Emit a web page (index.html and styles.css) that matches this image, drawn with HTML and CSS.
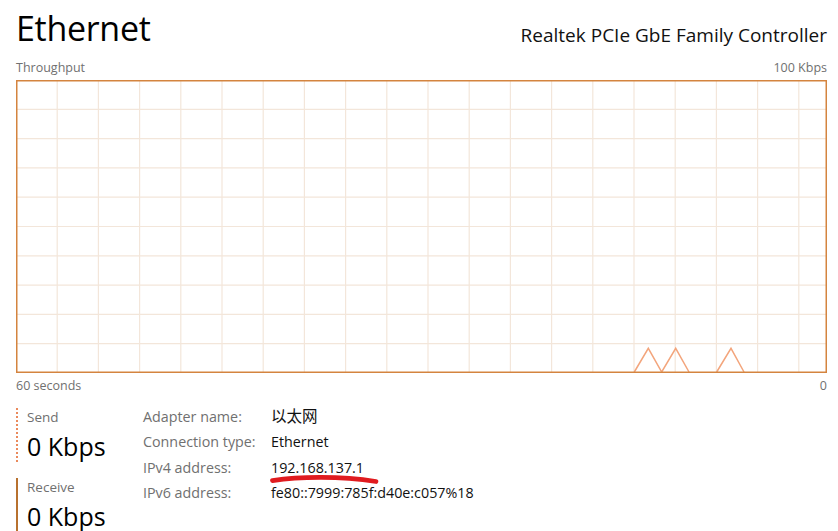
FILE: index.html
```html
<!DOCTYPE html>
<html>
<head>
<meta charset="utf-8">
<link rel="stylesheet" href="styles.css">
</head>
<body>
<div class="page">
  <header class="header">
    <h1 class="title">Ethernet</h1>
    <div class="subtitle">Realtek PCIe GbE Family Controller</div>
  </header>
  <div class="axis-row axis-top">
    <span>Throughput</span>
    <span>100 Kbps</span>
  </div>
  <svg class="chart" width="811" height="293" viewBox="0 0 811 293">
    <g class="grid">
      <line x1="41.2" y1="0" x2="41.2" y2="293"/>
      <line x1="82.4" y1="0" x2="82.4" y2="293"/>
      <line x1="123.6" y1="0" x2="123.6" y2="293"/>
      <line x1="164.8" y1="0" x2="164.8" y2="293"/>
      <line x1="206" y1="0" x2="206" y2="293"/>
      <line x1="247.2" y1="0" x2="247.2" y2="293"/>
      <line x1="288.4" y1="0" x2="288.4" y2="293"/>
      <line x1="329.6" y1="0" x2="329.6" y2="293"/>
      <line x1="370.8" y1="0" x2="370.8" y2="293"/>
      <line x1="412" y1="0" x2="412" y2="293"/>
      <line x1="453.2" y1="0" x2="453.2" y2="293"/>
      <line x1="494.4" y1="0" x2="494.4" y2="293"/>
      <line x1="535.6" y1="0" x2="535.6" y2="293"/>
      <line x1="576.8" y1="0" x2="576.8" y2="293"/>
      <line x1="618" y1="0" x2="618" y2="293"/>
      <line x1="659.2" y1="0" x2="659.2" y2="293"/>
      <line x1="700.4" y1="0" x2="700.4" y2="293"/>
      <line x1="741.6" y1="0" x2="741.6" y2="293"/>
      <line x1="782.8" y1="0" x2="782.8" y2="293"/>
      <line x1="0" y1="29.3" x2="811" y2="29.3"/>
      <line x1="0" y1="58.6" x2="811" y2="58.6"/>
      <line x1="0" y1="87.9" x2="811" y2="87.9"/>
      <line x1="0" y1="117.2" x2="811" y2="117.2"/>
      <line x1="0" y1="146.5" x2="811" y2="146.5"/>
      <line x1="0" y1="175.8" x2="811" y2="175.8"/>
      <line x1="0" y1="205.1" x2="811" y2="205.1"/>
      <line x1="0" y1="234.4" x2="811" y2="234.4"/>
      <line x1="0" y1="263.7" x2="811" y2="263.7"/>
    </g>
    <polyline class="trace" points="618.3,292 632.3,268.3 645.7,292 659.7,268.3 673,292"/>
    <polyline class="trace" points="700.7,292 715,268.3 728,292"/>
    <rect class="frame" x="0.75" y="0.75" width="809.5" height="291.5"/>
  </svg>
  <div class="axis-row axis-bottom">
    <span>60 seconds</span>
    <span>0</span>
  </div>
  <div class="bottom">
    <div class="stats">
      <div class="stat stat-send">
        <div class="stat-label">Send</div>
        <div class="stat-value">0 Kbps</div>
      </div>
      <div class="stat stat-recv">
        <div class="stat-label">Receive</div>
        <div class="stat-value">0 Kbps</div>
      </div>
    </div>
    <div class="details">
      <div class="dl">Adapter name:</div><div class="dv cjk">以太网</div>
      <div class="dl">Connection type:</div><div class="dv">Ethernet</div>
      <div class="dl">IPv4 address:</div><div class="dv">192.168.137.1</div>
      <div class="dl">IPv6 address:</div><div class="dv">fe80::7999:785f:d40e:c057%18</div>
    </div>
  </div>
  <svg class="scribble" width="838" height="531" viewBox="0 0 838 531">
    <path d="M272.5 480.5 C 300 476.5, 340 476, 376 481.5"/>
  </svg>
</div>
</body>
</html>
```
FILE: styles.css
```css
html, body {
  margin: 0;
  padding: 0;
  background: #ffffff;
}
body {
  font-family: "Open Sans", "Noto Sans", "Noto Sans CJK SC", sans-serif;
  color: #000;
  overflow: hidden;
}
.page {
  position: relative;
  width: 838px;
  height: 531px;
  box-sizing: border-box;
  padding: 8px 11px 0 16px;
}
.header {
  display: flex;
  justify-content: space-between;
  align-items: baseline;
  height: 40px;
}
.title {
  margin: 0;
  font-weight: 400;
  font-size: 34px;
  line-height: 40px;
  letter-spacing: -0.3px;
  color: #000;
}
.subtitle {
  font-size: 19px;
  line-height: 24px;
  color: #111;
  position: relative;
  top: 1px;
}
.axis-row {
  display: flex;
  justify-content: space-between;
  font-size: 12.5px;
  line-height: 16px;
  color: #707070;
}
.axis-top {
  margin-top: 12px;
  margin-bottom: 4px;
}
.axis-bottom {
  margin-top: 5px;
}
.chart {
  display: block;
}
.grid line {
  stroke: #f3e6da;
  stroke-width: 1.2;
}
.trace {
  fill: none;
  stroke: #f3a57c;
  stroke-width: 1.5;
}
.frame {
  fill: none;
  stroke: #d4843f;
  stroke-width: 1.5;
}
.bottom {
  display: flex;
  margin-top: 11px;
}
.stats {
  width: 127px;
  padding-top: 3px;
  display: flex;
  flex-direction: column;
  gap: 16px;
}
.stat {
  padding-left: 9px;
}
.stat-send {
  border-left: 2px dotted #ea8a5c;
}
.stat-recv {
  border-left: 2px solid #b8712f;
  height: 60px;
}
.stat-label {
  font-size: 13.5px;
  line-height: 18px;
  color: #707070;
}
.stat-value {
  margin-top: 4px;
  font-size: 25px;
  line-height: 32px;
  color: #000;
}
.details {
  display: grid;
  grid-template-columns: 128px auto;
  grid-auto-rows: 25.3px;
  font-size: 14.3px;
  line-height: 25px;
  align-content: start;
  margin-top: -1px;
}
.dl {
  color: #707070;
}
.dv {
  color: #111;
}
.cjk {
  font-size: 15.5px;
}
.scribble {
  position: absolute;
  left: 0;
  top: 0;
  pointer-events: none;
}
.scribble path {
  fill: none;
  stroke: #e01b1f;
  stroke-width: 4.8;
  stroke-linecap: round;
}
```
